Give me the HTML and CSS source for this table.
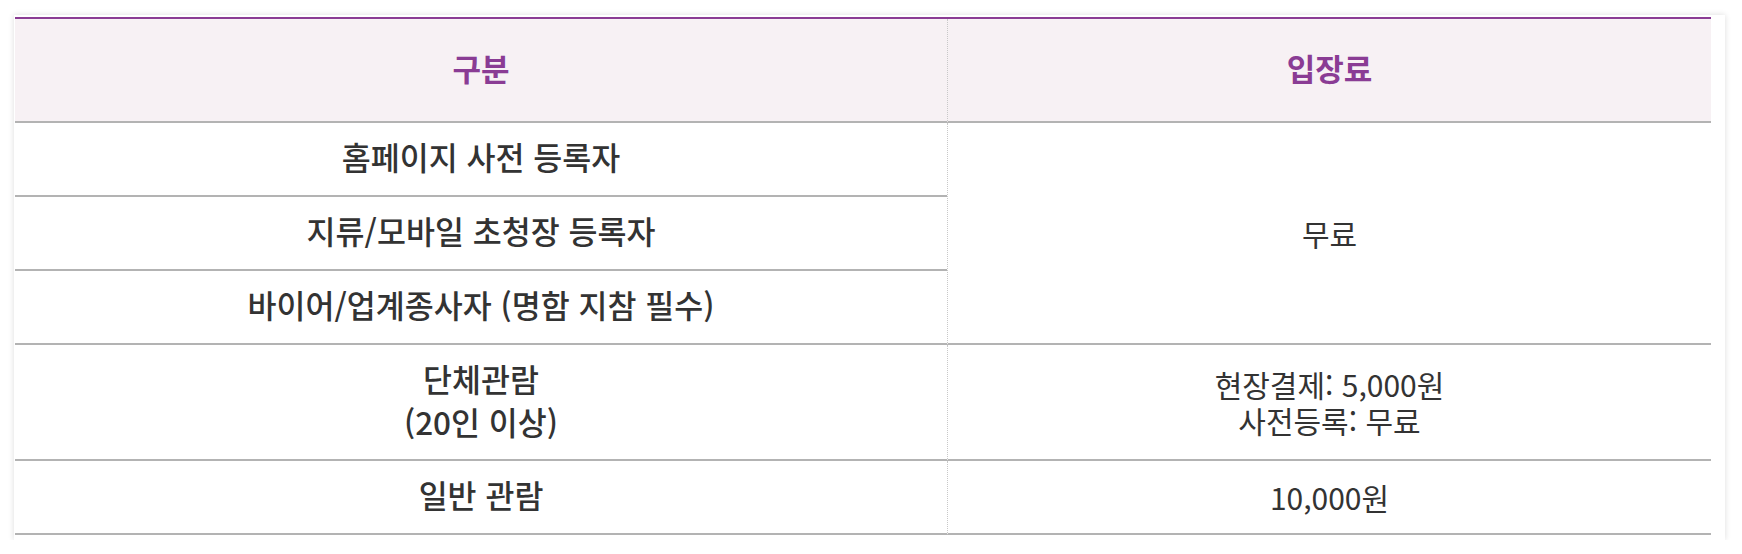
FILE: index.html
```html
<!DOCTYPE html>
<html lang="ko">
<head>
<meta charset="utf-8">
<link rel="stylesheet" href="styles.css">
</head>
<body>
<div class="card">
  <table class="fee-table">
    <thead>
      <tr>
        <th class="col-type">구분</th>
        <th class="col-fee">입장료</th>
      </tr>
    </thead>
    <tbody>
      <tr>
        <td class="type">홈페이지 사전 등록자</td>
        <td class="fee fee-span" rowspan="3">무료</td>
      </tr>
      <tr>
        <td class="type">지류/모바일 초청장 등록자</td>
      </tr>
      <tr>
        <td class="type">바이어/업계종사자 (명함 지참 필수)</td>
      </tr>
      <tr class="tall">
        <td class="type">단체관람<br>(20인 이상)</td>
        <td class="fee">현장결제: 5,000원<br>사전등록: 무료</td>
      </tr>
      <tr>
        <td class="type">일반 관람</td>
        <td class="fee">10,000원</td>
      </tr>
    </tbody>
  </table>
</div>
</body>
</html>
```
FILE: styles.css
```css
html, body {
  margin: 0;
  padding: 0;
  background: #ffffff;
}
body {
  font-family: "Noto Sans CJK KR", "Noto Sans", sans-serif;
  color: #333333;
}
.card {
  margin: 15px 0 0 14px;
  width: 1711px;
  box-sizing: border-box;
  padding: 2px 14px 5px 1px;
  background: #ffffff;
  box-shadow: 0 0 6px rgba(0, 0, 0, 0.14);
}
.fee-table {
  width: 100%;
  border-collapse: separate;
  border-spacing: 0;
  table-layout: fixed;
  border-top: 2px solid #8a3c94;
}
.col-type {
  width: 932px;
}
th {
  background: #f7f1f4;
  color: #8a3c94;
  font-size: 31px;
  font-weight: 700;
  height: 96px;
  padding: 0 0 6px;
  text-align: center;
  vertical-align: middle;
  border-bottom: 2px solid #b3b3b3;
}
th.col-fee {
  border-left: 1px dotted #c8c8c8;
}
td {
  padding: 0;
  height: 72px;
  text-align: center;
  vertical-align: middle;
  border-bottom: 2px solid #b3b3b3;
}
td.type {
  font-size: 31.5px;
  font-weight: 500;
  line-height: 43px;
  height: 67px;
  padding-bottom: 5px;
}
td.fee {
  font-size: 30px;
  font-weight: 400;
  line-height: 36px;
  border-left: 1px dotted #c8c8c8;
}
tr.tall td {
  height: 114px;
}
tr.tall td.type {
  height: 109px;
}
```
